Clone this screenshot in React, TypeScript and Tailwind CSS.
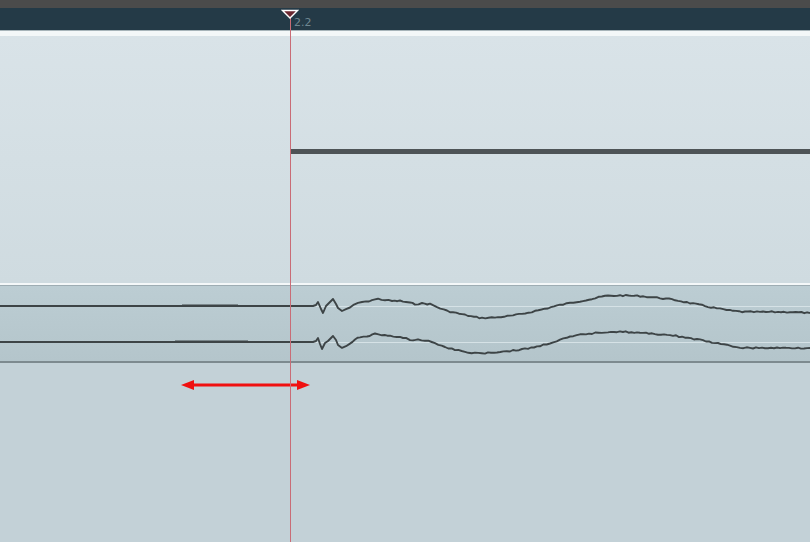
type Pt = [number, number];

const upperKeys: Pt[] = [
  [0, 306], [313, 306], [316, 305], [318, 302], [321, 309], [323, 313], [326, 306],
  [329, 303], [333, 299], [336, 304], [338, 308], [342, 311], [346, 309], [350, 308],
  [354, 305], [358, 303], [362, 302], [366, 302], [372, 300], [378, 299], [385, 300],
  [392, 301], [400, 301], [406, 302], [410, 303], [415, 304], [422, 303.5], [430, 304],
  [437, 307], [447, 311], [456, 313], [465, 315], [474, 317], [482, 318], [495, 317.5],
  [510, 316], [522, 314], [535, 311], [548, 308], [560, 305], [570, 303], [580, 301],
  [592, 299], [605, 296], [620, 295.5], [640, 296], [650, 297], [660, 298], [675, 300],
  [690, 303], [705, 306], [720, 309], [733, 311], [745, 312], [790, 312], [810, 313],
];

const lowerKeys: Pt[] = [
  [0, 342], [313, 342], [316, 341], [318, 338], [320, 344], [322, 349], [325, 343],
  [328, 341], [333, 336], [336, 340], [338, 345], [342, 348], [346, 346], [350, 344],
  [355, 340], [360, 337], [367, 336], [375, 334], [382, 335], [390, 336], [400, 337],
  [406, 338], [410, 340], [413, 341], [418, 340], [425, 340], [435, 343], [445, 347],
  [455, 349.5], [465, 352], [475, 353], [485, 353], [497, 352], [510, 351], [525, 349],
  [540, 346], [550, 343], [560, 340], [570, 337], [580, 335], [592, 333.5], [605, 332],
  [620, 331.5], [640, 333], [655, 334], [670, 335], [685, 337.5], [700, 340], [715, 343],
  [730, 346], [740, 347.5], [750, 348], [810, 348],
];

// small deterministic jitter so the trace looks like sampled audio
function wave(keys: Pt[], seed: number, quietFrom: number) {
  let s = seed;
  const rnd = () => {
    s = (s * 9301 + 49297) % 233280;
    return s / 233280;
  };
  const out: string[] = [];
  for (let i = 0; i < keys.length - 1; i++) {
    const [x0, y0] = keys[i];
    const [x1, y1] = keys[i + 1];
    const steps = Math.max(1, Math.round((x1 - x0) / 3));
    for (let k = 0; k < steps; k++) {
      const t = k / steps;
      const x = x0 + (x1 - x0) * t;
      let y = y0 + (y1 - y0) * t;
      if (x > quietFrom && x < 810) y += (rnd() - 0.5) * 1.4;
      out.push(`${out.length ? "L" : "M"}${x.toFixed(1)} ${y.toFixed(1)}`);
    }
  }
  const last = keys[keys.length - 1];
  out.push(`L${last[0]} ${last[1]}`);
  return out.join(" ");
}

const upper = wave(upperKeys, 7, 340);
const lower = wave(lowerKeys, 31, 340);

export default function App() {
  return (
    <div
      className="relative h-[542px] w-[810px] overflow-hidden bg-[#c3d1d7]"
      style={{ fontFamily: "'DejaVu Sans', sans-serif" }}
    >
      <div className="h-2 bg-[#4b4b4b]" />

      <div className="relative h-[22px] bg-[#243a47]">
        <span className="absolute left-[294px] top-[9px] text-[11px] leading-none text-[#6f8791]">
          2.2
        </span>
      </div>

      <div className="h-px bg-[#a7b4b9]" />
      <div className="h-[5px] bg-[#f3f7f8]" />

      {/* upper track */}
      <div className="h-[247px] bg-gradient-to-b from-[#d9e3e8] to-[#cfdbe0] pl-[291px] pt-[113px]">
        <div className="h-[5px] bg-[#4e5457]" />
      </div>

      <div className="h-[2px] bg-[#f4f8f9]" />
      <div className="h-px bg-[#9eadb3]" />

      {/* audio track */}
      <div className="relative h-[75px] bg-gradient-to-b from-[#bccdd3] to-[#b4c5cb]">
        <svg
          width="810"
          height="75"
          viewBox="0 286 810 75"
          className="absolute left-0 top-0"
        >
          <line x1="0" y1="306.5" x2="810" y2="306.5" stroke="#d6e2e6" strokeWidth="1" />
          <line x1="0" y1="342.5" x2="810" y2="342.5" stroke="#d6e2e6" strokeWidth="1" />
          <line x1="182" y1="305.5" x2="238" y2="305.5" stroke="#3d4446" strokeWidth="2" />
          <line x1="175" y1="341.5" x2="248" y2="341.5" stroke="#3d4446" strokeWidth="2" />
          <path d={upper} fill="none" stroke="#3d4446" strokeWidth="1.9" strokeLinejoin="round" />
          <path d={lower} fill="none" stroke="#3d4446" strokeWidth="1.9" strokeLinejoin="round" />
        </svg>
      </div>
      <div className="h-[2px] bg-[#7d8a8f]" />

      {/* lower area with range arrow */}
      <div className="pl-[180px] pt-[16px]">
        <svg width="132" height="12" viewBox="0 0 132 12">
          <line x1="10" y1="6" x2="120" y2="6" stroke="#f01010" strokeWidth="3" />
          <path d="M1 6 L14 1 L14 11 Z" fill="#f01010" />
          <path d="M130 6 L117 1 L117 11 Z" fill="#f01010" />
        </svg>
      </div>

      {/* playhead */}
      <div className="absolute bottom-0 left-[290px] top-[14px] w-px bg-[#c96c76]" />
      <svg
        width="18"
        height="10"
        viewBox="0 0 18 10"
        className="absolute left-[281px] top-[9px]"
      >
        <path d="M1.5 1.5 L16.5 1.5 L9 9 Z" fill="#6b2730" stroke="#ffffff" strokeWidth="1.4" strokeLinejoin="miter" />
      </svg>
    </div>
  );
}
